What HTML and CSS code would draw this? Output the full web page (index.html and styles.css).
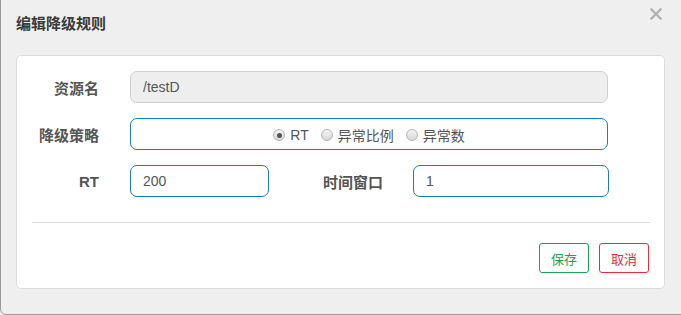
FILE: index.html
```html
<!DOCTYPE html>
<html lang="zh">
<head>
<meta charset="utf-8">
<link rel="stylesheet" href="styles.css">
</head>
<body>
<div class="dialog">
  <div class="header">
    <h4 class="title">编辑降级规则</h4>
    <span class="close" aria-label="关闭">
      <svg width="12" height="12" viewBox="0 0 12 12"><path d="M1.5 1.5 L10.5 10.5 M10.5 1.5 L1.5 10.5" stroke="#b3b3b3" stroke-width="2.4" stroke-linecap="square"/></svg>
    </span>
  </div>
  <div class="panel">
    <div class="row">
      <label class="label">资源名</label>
      <div class="input disabled wide">/testD</div>
    </div>
    <div class="row">
      <label class="label">降级策略</label>
      <div class="input focus wide radios">
        <span class="radio checked"></span><span class="rtext">RT</span>
        <span class="radio"></span><span class="rtext">异常比例</span>
        <span class="radio"></span><span class="rtext">异常数</span>
      </div>
    </div>
    <div class="row">
      <label class="label">RT</label>
      <div class="input focus short">200</div>
      <label class="label2">时间窗口</label>
      <div class="input focus mid">1</div>
    </div>
    <hr class="divider">
    <div class="actions">
      <button class="btn save">保存</button>
      <button class="btn cancel">取消</button>
    </div>
  </div>
</div>
</body>
</html>
```
FILE: styles.css
```css
html, body {
  margin: 0;
  padding: 0;
  width: 681px;
  height: 315px;
  overflow: hidden;
  background: #efefef;
  font-family: "Liberation Sans", "Noto Sans CJK SC", Arial, sans-serif;
}
.dialog {
  box-sizing: border-box;
  width: 690px;
  height: 321px;
  margin-top: -6px;
  border: 1px solid #9a9a9a;
  border-radius: 6px;
  background: #efefef;
  position: relative;
}
.header {
  height: 60px;
  display: flex;
  align-items: flex-start;
  justify-content: space-between;
}
.title {
  margin: 19px 0 0 15px;
  font-size: 15px;
  font-weight: bold;
  color: #3a3a3a;
  line-height: 20px;
}
.close {
  display: block;
  margin: 13px 19px 0 0;
  width: 12px;
  height: 12px;
  position: relative;
  left: -8px;
}
.close svg { display: block; }
.panel {
  box-sizing: border-box;
  width: 649px;
  margin-left: 15px;
  background: #fff;
  border: 1px solid #dcdcdc;
  border-radius: 5px;
  padding: 15px 0 15px 0;
  height: 234px;
}
.row {
  display: flex;
  align-items: center;
  height: 32px;
  margin-bottom: 15px;
}
.row:nth-child(3) { margin-bottom: 0; }
.label {
  width: 82px;
  text-align: right;
  font-size: 15px;
  font-weight: bold;
  color: #555;
  margin-right: 31px;
}
.label2 {
  width: 114px;
  text-align: right;
  font-size: 15px;
  font-weight: bold;
  color: #555;
  margin-right: 30px;
}
.input {
  box-sizing: border-box;
  height: 32px;
  border-radius: 7px;
  border: 1px solid #ccc;
  font-size: 14px;
  color: #555;
  padding: 0 12px;
  display: flex;
  align-items: center;
}
.input.disabled {
  background: #eeeeee;
  border-color: #cfcfcf;
}
.input.focus { border-color: #1a7cbc; }
.wide { width: 478px; }
.short { width: 139px; }
.mid { width: 196px; }
.radios {
  justify-content: center;
  font-size: 14px;
  padding-top: 2px;
}
.radio {
  box-sizing: border-box;
  width: 12px;
  height: 12px;
  border-radius: 50%;
  border: 1px solid #b5b5b5;
  background: linear-gradient(#f4f4f4, #d8d8d8);
  margin-right: 5px;
  position: relative;
}
.radio.checked::after {
  content: "";
  position: absolute;
  left: 2.5px;
  top: 2.5px;
  width: 5px;
  height: 5px;
  border-radius: 50%;
  background: #555;
}
.rtext { margin-right: 12px; color: #555; }
.rtext:last-child { margin-right: 0; }
.divider {
  border: 0;
  border-top: 1px solid #dedede;
  margin: 25px 14px 0 15px;
  height: 0;
}
.actions {
  display: flex;
  justify-content: flex-end;
  gap: 10px;
  margin: 20px 15px 0 0;
}
.btn {
  box-sizing: border-box;
  width: 50px;
  height: 30px;
  background: #fff;
  border-radius: 3px;
  font-size: 13px;
  font-family: "Liberation Sans", "Noto Sans CJK SC", sans-serif;
  padding: 0;
}
.save { border: 1px solid #1aa451; color: #1aa451; }
.cancel { border: 1px solid #ea2a3c; color: #ea2a3c; }
```
